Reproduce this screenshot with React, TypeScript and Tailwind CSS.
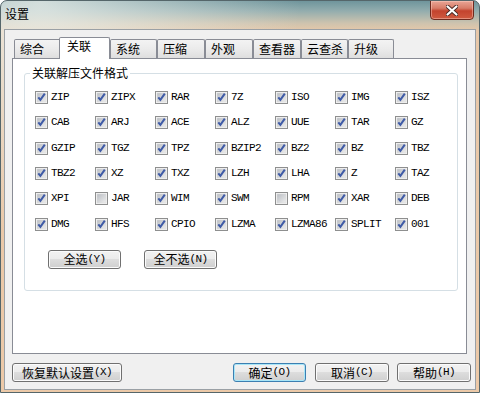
import React from "react";

const CJK = '"Noto Sans CJK SC", "Noto Sans", sans-serif';
const MONO = '"Liberation Mono", "Noto Sans CJK SC", monospace';

const rows: [string, boolean][][] = [
  [["ZIP", true], ["ZIPX", true], ["RAR", true], ["7Z", true], ["ISO", true], ["IMG", true], ["ISZ", true]],
  [["CAB", true], ["ARJ", true], ["ACE", true], ["ALZ", true], ["UUE", true], ["TAR", true], ["GZ", true]],
  [["GZIP", true], ["TGZ", true], ["TPZ", true], ["BZIP2", true], ["BZ2", true], ["BZ", true], ["TBZ", true]],
  [["TBZ2", true], ["XZ", true], ["TXZ", true], ["LZH", true], ["LHA", true], ["Z", true], ["TAZ", true]],
  [["XPI", true], ["JAR", false], ["WIM", true], ["SWM", true], ["RPM", false], ["XAR", true], ["DEB", true]],
  [["DMG", true], ["HFS", true], ["CPIO", true], ["LZMA", true], ["LZMA86", true], ["SPLIT", true], ["001", true]],
];

function CheckBox({ checked }: { checked: boolean }) {
  return (
    <svg width="13" height="13" viewBox="0 0 13 13" className="shrink-0">
      <defs>
        <linearGradient id="cbin" x1="0" y1="0" x2="1" y2="1">
          <stop offset="0" stopColor="#b9bdc3" />
          <stop offset="1" stopColor="#eeeeee" />
        </linearGradient>
      </defs>
      <rect x="0.5" y="0.5" width="12" height="12" fill="#f4f4f4" stroke="#8e8f8f" />
      <rect x="2" y="2" width="9" height="9" fill="url(#cbin)" stroke="#d8d8d8" strokeWidth="0.5" />
      {checked && (
        <path d="M3.3 6.3 L5.4 8.9 L9.8 2.6" fill="none" stroke="#3f5ba6" strokeWidth="2" strokeLinejoin="miter" />
      )}
    </svg>
  );
}

function Btn({
  cn,
  latin,
  w,
  def,
  className = "",
}: {
  cn: string;
  latin: string;
  w: string;
  def?: boolean;
  className?: string;
}) {
  return (
    <div
      className={`${w} ${className} h-[19px] rounded-[3px] border flex items-center justify-center text-[12px] text-black ${
        def
          ? "border-[#3c7fb1] shadow-[inset_0_0_0_1px_#a8e6f8]"
          : "border-[#707070] shadow-[inset_0_0_0_1px_#fbfbfb]"
      } bg-[linear-gradient(180deg,#f2f2f2_0%,#ebebeb_50%,#dddddd_50%,#cfcfcf_100%)]`}
    >
      <span style={{ fontFamily: CJK }} className="leading-none">{cn}</span>
      <span style={{ fontFamily: MONO }} className="leading-none text-[11px] tracking-[-0.6px]">{latin}</span>
    </div>
  );
}

const tabs = [
  { t: "综合", w: "w-[47px]" },
  { t: "关联", w: "w-[51px]", sel: true },
  { t: "系统", w: "w-[47px]" },
  { t: "压缩", w: "w-[48px]" },
  { t: "外观", w: "w-[48px]" },
  { t: "查看器", w: "w-[48px]" },
  { t: "云查杀", w: "w-[47px]" },
  { t: "升级", w: "w-[46px]" },
];

export default function App() {
  return (
    <div
      className="w-[480px] h-[393px] overflow-hidden rounded-t-[7px] border border-[#55666a] bg-[radial-gradient(ellipse_at_8%_0%,rgba(235,240,236,0.8),rgba(235,240,236,0)_42%),linear-gradient(180deg,#6f959c_0px,#93adae_10px,#cdc3ae_22px,#e8c8a9_30px,#ecc9a8_100%)]"
      style={{ fontFamily: CJK }}
    >
      <div className="h-[28px] flex items-start justify-between">
        <span className="pl-[4px] pt-[6px] text-[12px] leading-[14px] text-black">设置</span>
        <div className="mr-[5px] w-[44px] h-[20px] -mt-[1px] rounded-b-[4px] border border-[#6e2a1f] bg-[linear-gradient(180deg,#e9a596_0%,#d77c68_40%,#c3432e_55%,#cf5a40_100%)] shadow-[inset_0_0_0_1px_rgba(255,210,200,0.45)] flex items-center justify-center">
          <svg width="12" height="11" viewBox="0 0 12 11">
            <path d="M1.5 1.5 L10.5 9.5 M10.5 1.5 L1.5 9.5" stroke="#4a2a26" strokeWidth="4" strokeLinecap="round" />
            <path d="M1.5 1.5 L10.5 9.5 M10.5 1.5 L1.5 9.5" stroke="#ffffff" strokeWidth="2.2" strokeLinecap="round" />
          </svg>
        </div>
      </div>

      <div className="ml-[3px] w-[472px] h-[361px] bg-[#f0f0f0] border border-[#9aa0a5] flex flex-col">
        {/* tabs */}
        <div className="mt-[7px] h-[21px] pl-[9px] flex items-end">
          {tabs.map((tb) =>
            tb.sel ? (
              <div
                key={tb.t}
                className={`${tb.w} -ml-[2px] relative z-10 h-[22px] -mb-[1px] bg-white border border-b-0 border-[#898c95] rounded-t-[2px] pl-[7px] pt-[1px] text-[12px] leading-[14px] text-black`}
              >
                {tb.t}
              </div>
            ) : (
              <div
                key={tb.t}
                className={`${tb.w} h-[19px] border border-b-0 border-[#898c95] rounded-t-[2px] bg-[linear-gradient(180deg,#f3f3f3_0%,#ebebeb_50%,#dedede_100%)] pl-[5px] pt-[2px] text-[12px] leading-[14px] text-black`}
              >
                {tb.t}
              </div>
            )
          )}
        </div>

        {/* panel */}
        <div className="ml-[7px] w-[455px] h-[296px] bg-white border border-[#898c95]">
          <div className="mt-[14px] ml-[11px] w-[434px] h-[218px] border border-[#d5dfe5] rounded-[3px] relative">
            <span className="absolute left-[5px] -top-[8px] bg-white px-[2px] text-[12px] leading-[14px] text-black">
              关联解压文件格式
            </span>
            <div className="pt-[11px] pl-[10px] grid grid-cols-[repeat(7,60px)] auto-rows-[25.3px]">
              {rows.flat().map(([label, checked]) => (
                <div key={label} className="flex items-center gap-[3px]">
                  <CheckBox checked={checked} />
                  <span
                    style={{ fontFamily: MONO }}
                    className="text-[11px] tracking-[-0.6px] leading-none text-black"
                  >
                    {label}
                  </span>
                </div>
              ))}
            </div>
            <div className="mt-[13px] pl-[23px] flex gap-[23px]">
              <Btn cn="全选" latin="(Y)" w="w-[73px]" />
              <Btn cn="全不选" latin="(N)" w="w-[73px]" />
            </div>
          </div>
        </div>

        {/* bottom buttons */}
        <div className="mt-[9px] pl-[7px] flex">
          <Btn cn="恢复默认设置" latin="(X)" w="w-[110px]" />
          <Btn cn="确定" latin="(O)" w="w-[73px]" def className="ml-[111px]" />
          <Btn cn="取消" latin="(C)" w="w-[74px]" className="ml-[9px]" />
          <Btn cn="帮助" latin="(H)" w="w-[74px]" className="ml-[8px]" />
        </div>
      </div>
    </div>
  );
}
